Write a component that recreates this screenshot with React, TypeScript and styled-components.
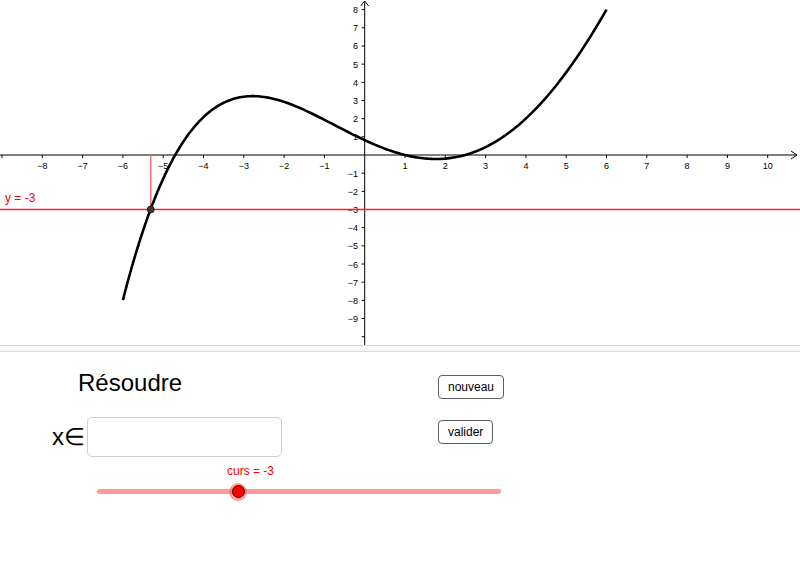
import React from "react";
import styled, { createGlobalStyle } from "styled-components";

const GlobalStyle = createGlobalStyle`
  html, body {
    margin: 0;
    padding: 0;
    background: #fff;
  }
  body {
    font-family: "Liberation Sans", Arial, sans-serif;
    overflow: hidden;
  }
`;

// repère : origine et unités en pixels
const X0 = 364.7;
const Y0 = 155;
const UX = 40.3;
const UY = 18.17;
const W = 800;
const H = 345;

const f = (x: number) =>
  -0.00513 * (x + 4.71) * (x - 1) * (x - 2.49) * (x - 14.3) +
  0.00009 * (x + 6) * (x - 6) * (x + 5.31) * (x - 1) * (x - 2.49);

const px = (x: number) => X0 + x * UX;
const py = (y: number) => Y0 - y * UY;

const curvePath = () => {
  const pts: string[] = [];
  for (let i = 0; i <= 240; i++) {
    const x = -6 + (12 * i) / 240;
    pts.push(`${i === 0 ? "M" : "L"}${px(x).toFixed(2)},${py(f(x)).toFixed(2)}`);
  }
  return pts.join(" ");
};

const Page = styled.div`
  width: 800px;
  height: 584px;
  display: flex;
  flex-direction: column;
  background: #fff;
`;

const GraphView = styled.svg`
  display: block;
  flex: none;
  text {
    font-family: "Liberation Sans", Arial, sans-serif;
  }
`;

const Divider = styled.div`
  flex: none;
  height: 5px;
  border-top: 1px solid #dadada;
  border-bottom: 1px solid #dadada;
  background: #f7f7f7;
`;

const ControlView = styled.div`
  flex: 1;
  display: grid;
  grid-template-columns: 438px 1fr;
`;

const LeftColumn = styled.div`
  display: flex;
  flex-direction: column;
  padding-top: 17px;
`;

const Title = styled.div`
  margin-left: 78px;
  font-size: 24px;
  line-height: 28px;
  color: #000;
`;

const AnswerRow = styled.div`
  display: flex;
  align-items: center;
  margin-top: 20px;
  margin-left: 52px;
  height: 40px;
`;

const Symbol = styled.span`
  font-size: 24px;
  line-height: 40px;
  color: #000;
`;

const AnswerInput = styled.input`
  box-sizing: border-box;
  width: 195px;
  height: 40px;
  margin-left: 2px;
  border: 1px solid #cfcfcf;
  border-radius: 5px;
  background: #fff;
  outline: none;
  font: 16px "Liberation Sans", Arial, sans-serif;
`;

const SliderBlock = styled.div`
  margin-top: 7px;
  margin-left: 97px;
  width: 404px;
`;

const SliderLabel = styled.div`
  padding-left: 130px;
  font-size: 12px;
  line-height: 14px;
  color: #ff0000;
`;

const Track = styled.div`
  position: relative;
  margin-top: 11px;
  height: 5px;
  border-radius: 3px;
  background: #ff9a9a;
`;

const Knob = styled.div`
  position: absolute;
  top: 50%;
  width: 18px;
  height: 18px;
  border-radius: 50%;
  transform: translate(-50%, -50%);
  background: rgba(255, 90, 90, 0.6);
  display: flex;
  align-items: center;
  justify-content: center;
  &::after {
    content: "";
    width: 11px;
    height: 11px;
    border-radius: 50%;
    background: #ff0000;
    border: 1px solid #2a1010;
  }
`;

const RightColumn = styled.div`
  display: flex;
  flex-direction: column;
  align-items: flex-start;
  gap: 21px;
  padding-top: 23px;
`;

const Button = styled.button`
  box-sizing: border-box;
  height: 24px;
  padding: 0 9px;
  border: 1.5px solid #5f5f5f;
  border-radius: 4px;
  background: #fff;
  font: 12px "Liberation Sans", Arial, sans-serif;
  color: #000;
  cursor: pointer;
`;

const minus = (n: number) => (n < 0 ? `\u2212${-n}` : `${n}`);

function Graph() {
  const xs: number[] = [];
  for (let k = -9; k <= 10; k++) if (k !== 0) xs.push(k);
  const ys: number[] = [];
  for (let k = -10; k <= 8; k++) if (k !== 0) ys.push(k);
  const xi = -5.31;

  return (
    <GraphView width={W} height={H} viewBox={`0 0 ${W} ${H}`}>
      {/* axes */}
      <line x1={0} y1={Y0} x2={797} y2={Y0} stroke="#000" strokeWidth={1} />
      <polyline points={`791,151 797,155 791,159`} fill="none" stroke="#000" strokeWidth={1} />
      <line x1={X0} y1={H} x2={X0} y2={1} stroke="#000" strokeWidth={1} />
      <polyline points={`${X0 - 4},6 ${X0},1 ${X0 + 4},6`} fill="none" stroke="#000" strokeWidth={1} />

      {xs.map((k) => (
        <g key={`x${k}`}>
          <line x1={px(k)} y1={Y0} x2={px(k)} y2={Y0 + 3} stroke="#000" strokeWidth={1} />
          {k >= -8 && (
            <text x={px(k)} y={168.5} fontSize={9} textAnchor="middle" fill="#000">
              {minus(k)}
            </text>
          )}
        </g>
      ))}
      {ys.map((k) => (
        <g key={`y${k}`}>
          <line x1={X0 - 3} y1={py(k)} x2={X0} y2={py(k)} stroke="#000" strokeWidth={1} />
          {k >= -9 && (
            <text x={358} y={py(k) + 3.5} fontSize={9} textAnchor="end" fill="#000">
              {minus(k)}
            </text>
          )}
        </g>
      ))}

      {/* droite y = -3 */}
      <line x1={0} y1={py(-3)} x2={W} y2={py(-3)} stroke="#ff2020" strokeWidth={1.4} />
      <text x={5} y={201.5} fontSize={12} fill="#ff0000">
        y = -3
      </text>
      <line x1={px(xi)} y1={Y0} x2={px(xi)} y2={py(-3)} stroke="#ff6b6b" strokeWidth={1.5} />

      {/* courbe */}
      <path d={curvePath()} fill="none" stroke="#000" strokeWidth={2.6} strokeLinecap="butt" />

      <circle cx={px(xi)} cy={py(-3)} r={3.5} fill="#3a3a3a" stroke="#111" strokeWidth={0.8} />
    </GraphView>
  );
}

export default function App() {
  const curs = -3;
  const ratio = (curs + 10) / 20;
  return (
    <Page>
      <GlobalStyle />
      <Graph />
      <Divider />
      <ControlView>
        <LeftColumn>
          <Title>Résoudre</Title>
          <AnswerRow>
            <Symbol>x∈</Symbol>
            <AnswerInput type="text" />
          </AnswerRow>
          <SliderBlock>
            <SliderLabel>curs = -3</SliderLabel>
            <Track>
              <Knob style={{ left: `${ratio * 100}%` }} />
            </Track>
          </SliderBlock>
        </LeftColumn>
        <RightColumn>
          <Button>nouveau</Button>
          <Button>valider</Button>
        </RightColumn>
      </ControlView>
    </Page>
  );
}
